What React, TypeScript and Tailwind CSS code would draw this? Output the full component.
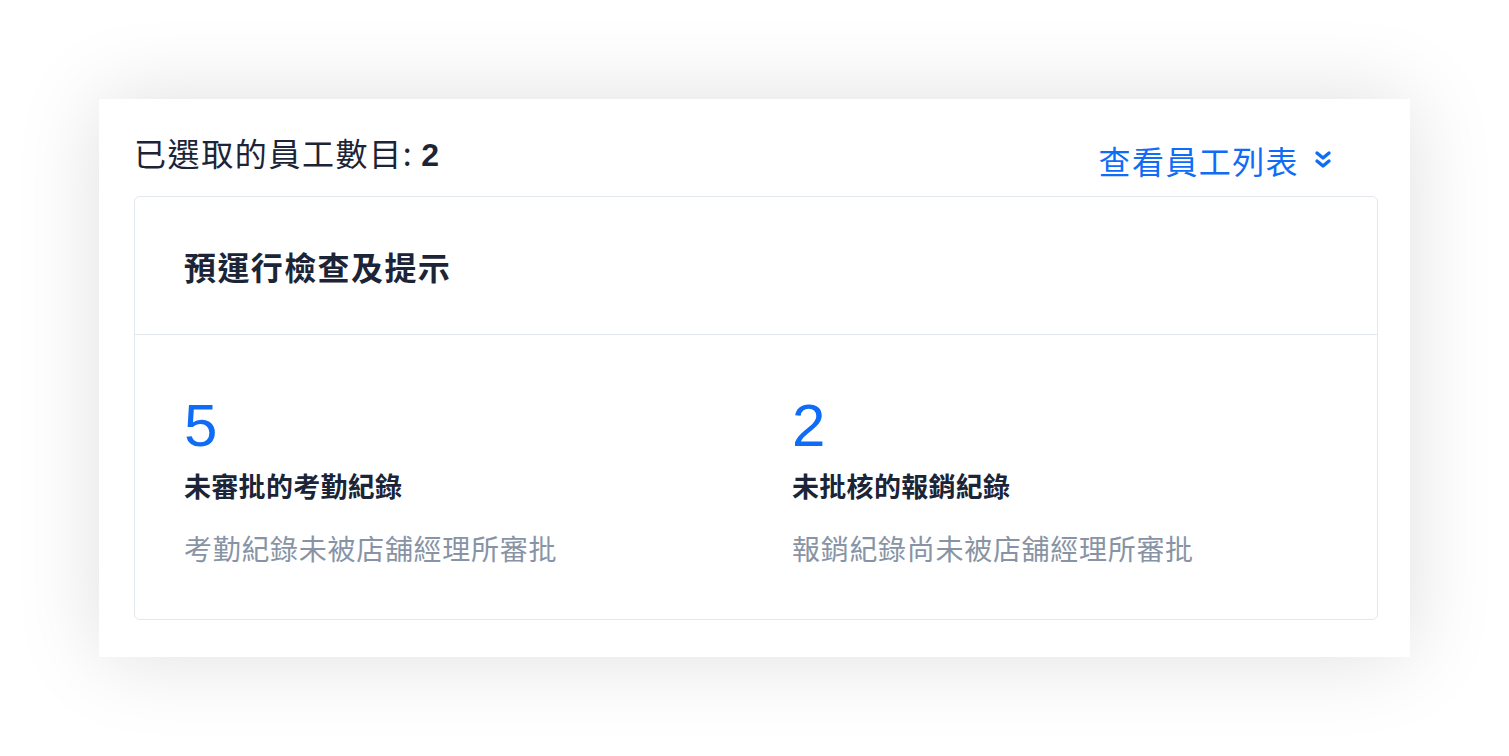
import React from "react";

const font = { fontFamily: '"Noto Sans CJK TC", "Noto Sans", sans-serif' };

function DoubleChevron() {
  return (
    <svg width="20" height="22" viewBox="0 0 20 22" fill="none" stroke="currentColor" strokeWidth="3.4" strokeLinecap="round" strokeLinejoin="round">
      <path d="M4 4l6 5 6-5" />
      <path d="M4 12l6 5 6-5" />
    </svg>
  );
}

function Stat({ n, label, desc }: { n: string; label: string; desc: string }) {
  return (
    <div className="flex flex-col">
      <div className="text-[60px] leading-[60px] text-[#0f6cf7]" style={{ fontFamily: '"Liberation Sans", Arial, sans-serif' }}>{n}</div>
      <div className="mt-[12px] text-[27px] leading-[36px] font-bold text-[#1b2537] tracking-[0.3px]">{label}</div>
      <div className="mt-[25px] text-[28px] leading-[38px] text-[#8894a5] tracking-[0.7px]">{desc}</div>
    </div>
  );
}

export default function App() {
  return (
    <div className="w-[1509px] h-[756px] bg-white pt-[99px] pl-[99px]" style={font}>
      <div className="w-[1311px] h-[558px] bg-white shadow-[0_0_80px_rgba(0,0,0,0.13)] pl-[35px] pr-[32px] flex flex-col">
        <div className="flex items-start justify-between h-[97px]">
          <div className="mt-[32px] text-[32px] leading-[42px] text-[#1b2537] tracking-[1.6px]">
            已選取的員工數目:<span className="font-bold ml-[8px]" style={{ fontFamily: '"Liberation Sans", Arial, sans-serif' }}>2</span>
          </div>
          <div className="mt-[40px] mr-[45px] flex items-center gap-[14px] text-[32px] leading-[42px] text-[#0f6cf7] tracking-[1.4px]">
            <span>查看員工列表</span>
            <DoubleChevron />
          </div>
        </div>
        <div className="border border-[#e3e7ee] rounded-[6px] h-[424px] flex flex-col">
          <div className="h-[138px] border-b border-[#e3e7ee] flex items-center pl-[49px]">
            <div className="text-[32px] leading-[42px] font-bold text-[#1b2537] tracking-[1.4px]">預運行檢查及提示</div>
          </div>
          <div className="grid grid-cols-2 gap-[72px] pl-[49px] pr-[49px] pt-[61px]">
            <Stat n="5" label="未審批的考勤紀錄" desc="考勤紀錄未被店舖經理所審批" />
            <Stat n="2" label="未批核的報銷紀錄" desc="報銷紀錄尚未被店舖經理所審批" />
          </div>
        </div>
      </div>
    </div>
  );
}
